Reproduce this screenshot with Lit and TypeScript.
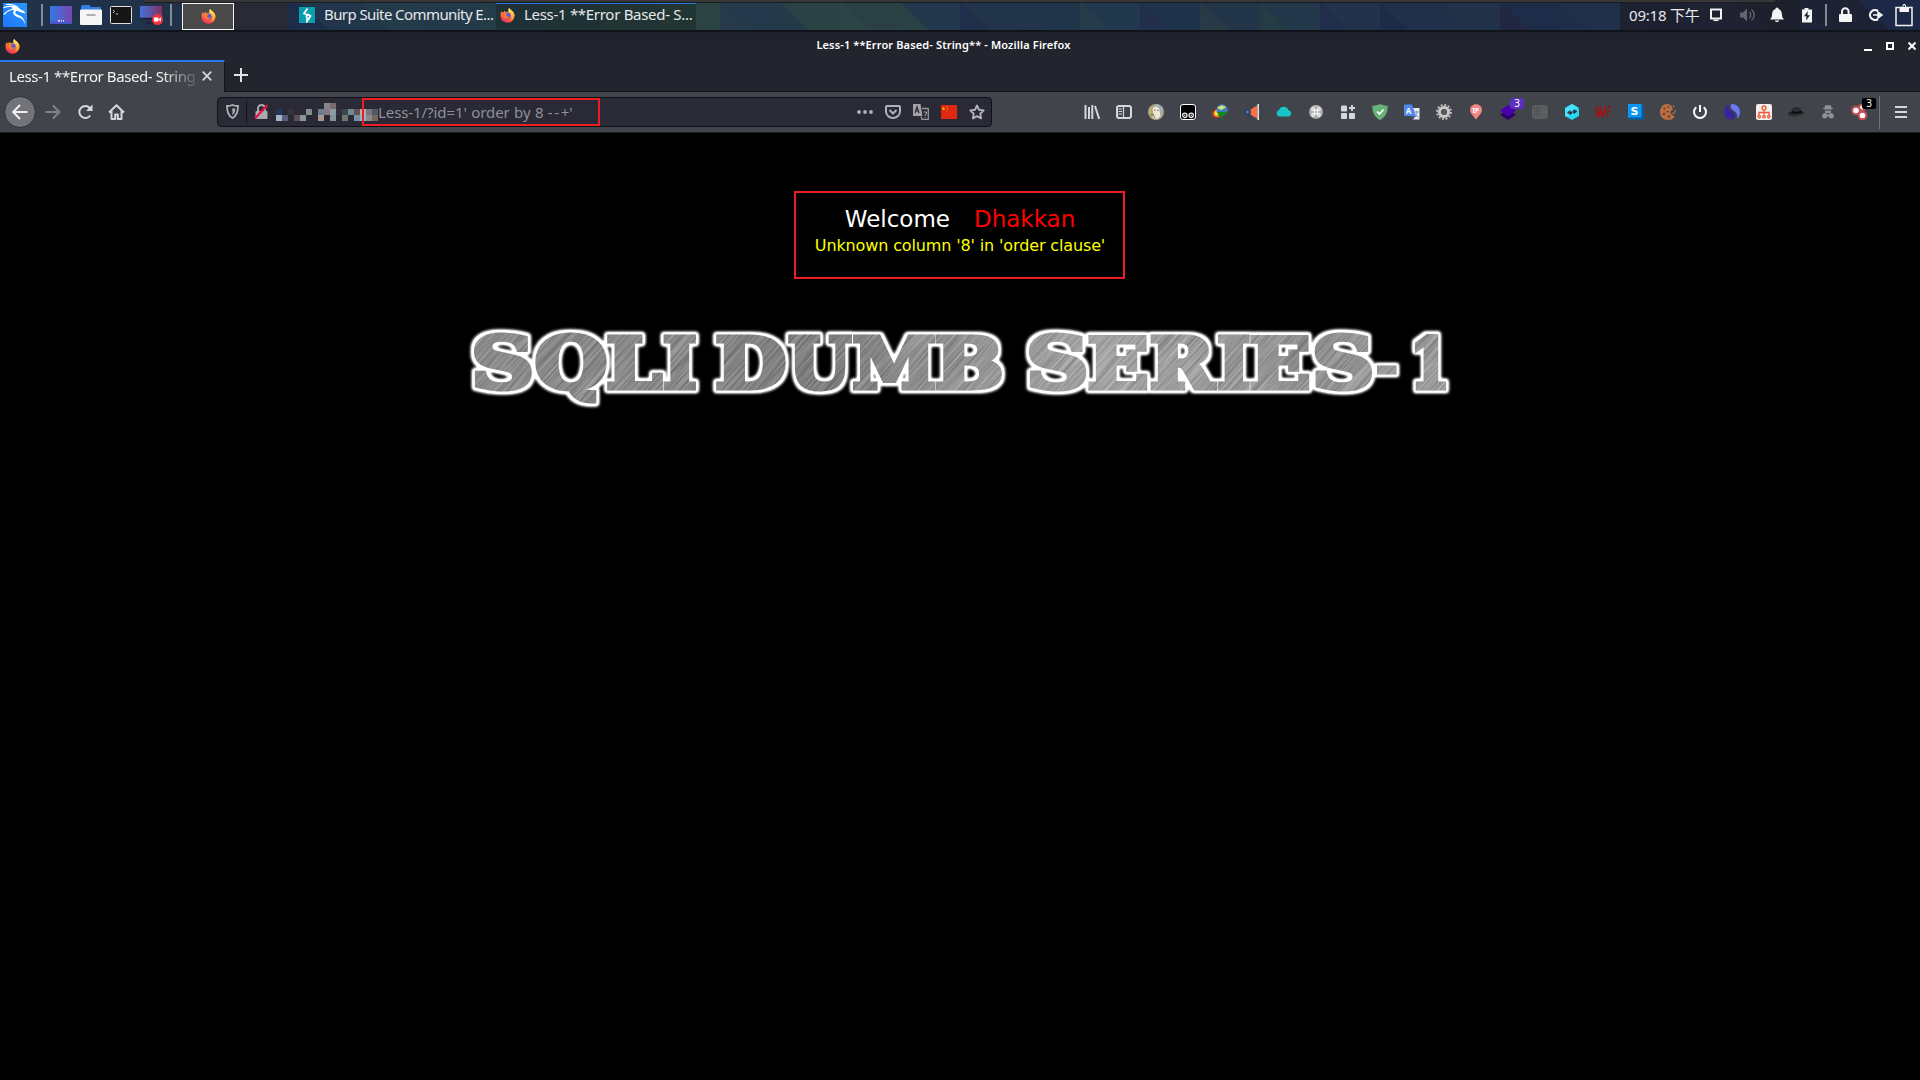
import { LitElement, html, svg, css, TemplateResult } from "lit";
import { customElement } from "lit/decorators.js";

const icon = (w: number, h: number, body: TemplateResult, vb = `0 0 ${w} ${h}`) =>
  html`<svg class="icon" width=${w} height=${h} viewBox=${vb}>${body}</svg>`;

const firefox = (s: number) => icon(s, s, svg`
  <defs>
    <linearGradient id="fx" x1="0.8" y1="0" x2="0.3" y2="1"><stop offset="0" stop-color="#ffe14a"/><stop offset=".45" stop-color="#ff8a2a"/><stop offset="1" stop-color="#f5275c"/></linearGradient>
    <linearGradient id="fy" x1="0" y1="0" x2="0" y2="1"><stop offset="0" stop-color="#fff36a"/><stop offset="1" stop-color="#ff8d22"/></linearGradient>
  </defs>
  <path d="M1.6 3.4 3.2 5 5 2.8 6 4.6 9.6 3.4C8.8 2 9 .8 10 0c.6 2.2 5 3 5.400 7.500C15.600 12.500 12 15.700 8 15.700S.5 12.500.5 8c0-1.800.3-3.400 1.100-4.600z" fill="url(#fx)"/>
  <path d="M9.900 0c.6 2.200 4.900 3.200 5.400 7.400.2 3-1.500 5-3.700 5.800C13 10 12.400 6 9.600 4.500 8.400 3 8.800 1 9.900 0z" fill="url(#fy)"/>
  <circle cx="8" cy="8" r="3.300" fill="#5a57d8"/>
  <path d="M4 6.400c1-1 3-.9 4.200.1L6.300 7.700c.5 1.500 2.500 2 4 1-1 3-6 3-7-.2z" fill="#ff7a2c"/>
`, "0 0 16 16");

interface Cell { x: number; a: string; b: string }
const PANEL: Cell[] = [
  { x: 0, a: "#20354b", b: "#203349" }, { x: 60, a: "#20344a", b: "#203249" },
  { x: 120, a: "#20344b", b: "#203148" }, { x: 180, a: "#203148", b: "#203148" },
  { x: 240, a: "#1d2d49", b: "#1d2d49" }, { x: 300, a: "#1d2e4b", b: "#21354b" },
  { x: 360, a: "#22364a", b: "#243b4a" }, { x: 420, a: "#243a4a", b: "#233a4c" },
  { x: 480, a: "#243d48", b: "#243b49" }, { x: 540, a: "#273f45", b: "#253c47" },
  { x: 600, a: "#2a4343", b: "#284142" }, { x: 660, a: "#2c4544", b: "#2b4443" },
  { x: 720, a: "#263a4a", b: "#24394b" }, { x: 780, a: "#243a49", b: "#2b4245" },
  { x: 840, a: "#2c4446", b: "#2a4044" }, { x: 900, a: "#2a4145", b: "#22374b" },
  { x: 960, a: "#212e4b", b: "#21344a" }, { x: 1020, a: "#22354a", b: "#20344a" },
  { x: 1080, a: "#263c4a", b: "#22384c" }, { x: 1140, a: "#212f4c", b: "#1f344a" },
  { x: 1200, a: "#293a46", b: "#233649" }, { x: 1260, a: "#253c44", b: "#223749" },
  { x: 1320, a: "#202e4b", b: "#21324a" }, { x: 1380, a: "#1e2b48", b: "#202f4a" },
  { x: 1440, a: "#203049", b: "#213148" }, { x: 1500, a: "#212641", b: "#1d2c48" },
  { x: 1560, a: "#1f2e48", b: "#20304a" }, { x: 1620, a: "#1e2231", b: "#1d2030" },
  { x: 1680, a: "#1d2131", b: "#1e2231" }, { x: 1740, a: "#1f2130", b: "#1e202e" },
  { x: 1800, a: "#1d2439", b: "#1d2333" }, { x: 1860, a: "#1c2235", b: "#1c2845" },
];

const MOSAIC: [number, number, string][] = [
  [0, 6, "#253659"], [0, 12, "#a3b4c4"], [6, 12, "#556078"], [12, 6, "#35313a"], [18, 12, "#5b5054"],
  [24, 12, "#8b9499"], [30, 6, "#868b92"], [42, 6, "#6a7c92"], [42, 12, "#a8978f"], [48, 0, "#87838a"],
  [54, 0, "#776b6d"], [48, 6, "#857884"], [54, 6, "#8b9da3"], [54, 12, "#86929e"], [60, 6, "#30323c"],
  [66, 6, "#404451"], [66, 12, "#71756f"], [72, 6, "#6b8a95"], [78, 6, "#6a5053"], [78, 12, "#7691a5"],
  [84, 6, "#b3aeb1"], [84, 12, "#9db2c0"], [90, 6, "#77777d"], [90, 12, "#8b8a8a"], [96, 6, "#535a63"], [96, 12, "#7a675c"],
];

// Each banner letter is stretched to fill the box [left, right, top, bottom].
type Letter = [string, number, number, number, number];
const LETTERS: Letter[] = [
  ["S", 474.3, 531.4, 332.5, 392], ["Q", 535.7, 606.5, 332, 403], ["L", 607.4, 663, 335, 390.5],
  ["I", 663.4, 696, 335, 390.5], ["D", 716.4, 785.7, 335, 390.5], ["U", 788, 852.4, 335, 392],
  ["M", 853, 935.4, 335, 390.5], ["B", 936, 1002, 335, 390.5], ["S", 1029.3, 1086, 332.5, 392],
  ["E", 1088.7, 1147.3, 335, 390.5], ["R", 1150.7, 1217.3, 335, 390.5], ["I", 1218, 1250, 335, 390.5],
  ["E", 1250.7, 1309.3, 335, 390.5], ["S", 1315, 1371.7, 332.5, 392], ["-", 1376, 1397.3, 364, 375],
  ["1", 1414.3, 1446.7, 334, 390.5],
];

function letterTransform([c, l, r, t, b]: Letter) {
  const ctx = document.createElement("canvas").getContext("2d")!;
  ctx.font = "bold 200px 'DejaVu Serif'";
  const m = ctx.measureText(c);
  const pad = 2.5;
  const w = m.actualBoundingBoxRight + m.actualBoundingBoxLeft;
  const h = m.actualBoundingBoxAscent + m.actualBoundingBoxDescent;
  const sx = (r - l - 2 * pad) / w;
  const sy = (b - t - 2 * pad) / h;
  return `matrix(${sx} 0 0 ${sy} ${l + pad + m.actualBoundingBoxLeft * sx} ${t + pad + m.actualBoundingBoxAscent * sy})`;
}

const L = "#d7d7db";
const EXT: TemplateResult[] = [
  icon(16, 16, svg`<path d="M1.500 1v14M5 3v12M8.300 1v14M11 2l4.200 13" stroke=${L} stroke-width="2" fill="none"/>`),
  icon(16, 16, svg`<rect x="1" y="2" width="14" height="12" rx="2" fill="none" stroke=${L} stroke-width="2"/><path d="M7.500 2v12M2.500 5h3.500M2.500 7.500h3.500M2.500 10h3.500" stroke=${L} stroke-width="1.200"/>`),
  icon(16, 16, svg`<circle cx="8" cy="8" r="8" fill="#a9a58b"/><path d="M1 5 6 1l2 5-4 8C1 12 0 8 1 5z" fill="#b5aa74"/><path d="M7 0c4 0 7 2 8 5l-3 5-5-6z" fill="#9bb0b8"/><path d="M4.500 6c1-5 6-4 7 0l1 6-3 3-5-1 1-4z" fill="#efe6d6"/><path d="M6 6h1.500M9 6.500h1.500" stroke="#8a6b50"/><path d="M2 12l3-2 2 4" stroke="#6f7f45" fill="none"/>`),
  icon(16, 16, svg`<rect x=".5" y=".5" width="15" height="15" rx="2.500" fill="#000" stroke="#fff"/><g fill="#000" stroke="#e8e8e8" stroke-width="1.300"><circle cx="4.800" cy="11.300" r="2.200"/><circle cx="11.200" cy="11.300" r="2.200"/></g><circle cx="4.800" cy="11.300" r=".7" fill="#fff"/><circle cx="11.200" cy="11.300" r=".7" fill="#fff"/>`),
  icon(16, 16, svg`<ellipse cx="6" cy="9" rx="6" ry="4.500" transform="rotate(-25 6 9)" fill="#e5391f"/><ellipse cx="7" cy="9" rx="5" ry="3.500" transform="rotate(-25 6 9)" fill="#f6e32e"/><circle cx="10" cy="6" r="5.700" fill="#3c7dcc"/><path d="M5 4c3-3 6-3 9-1-2 2-3 2-5 3z" fill="#c9db3b"/><circle cx="9.500" cy="3.500" r="1.700" fill="#cfe2df" opacity=".8"/><path d="m5 8 11-.5-2 2-1 2-2-.5-1 5-1.500-4-3.500 0 2-2z" fill="#108a13"/>`),
  icon(16, 16, svg`<path d="M6.500 5.500 13 1.500v13l-6.500-4z" fill="#ff7043"/><path d="M14.200 0v16" stroke="#dfe5e8" stroke-width="1.600"/><circle cx="3.500" cy="8" r="3.200" fill="#2b4166"/><circle cx="3.500" cy="8" r="1.300" fill="#6f88a8"/><path d="m4.500 10.500 1 4.500" stroke="#2b4166" stroke-width="2"/>`),
  icon(16, 16, svg`<path d="M3.500 12.500a3.400 3.400 0 0 1-.5-6.600A5 5 0 0 1 12.300 6a3.400 3.400 0 0 1 .8 6.500z" fill="#17c5c9"/>`),
  icon(16, 16, svg`<circle cx="8" cy="8" r="7" fill="#a6a6a8"/><circle cx="8" cy="7" r="6" fill="#b4b4b5"/><path d="M6.400 6.400h3.200v3.200H6.400zM6.400 6.400H5.200a1.300 1.300 0 1 1 1.200-1.300zM9.600 6.400V5.200A1.300 1.300 0 1 1 10.800 6.400zM9.600 9.600h1.200a1.300 1.300 0 1 1-1.200 1.300zM6.400 9.600v1.300A1.300 1.300 0 1 1 5.200 9.600z" fill="none" stroke="#f7f7f7" stroke-width="1.100"/>`),
  icon(16, 16, svg`<g fill=${L}><rect x="1" y="1.500" width="6" height="6" rx="1"/><rect x="1" y="9" width="6" height="6" rx="1"/><rect x="9" y="9" width="6" height="6" rx="1"/></g><path d="M12 1v6M9 4h6" stroke=${L} stroke-width="1.800"/>`),
  icon(16, 16, svg`<path d="M8 0c2.500 1.300 5 1.700 7.800 1.800C15.800 9 13 13.500 8 16 3 13.500.2 9 .2 1.800 3 1.700 5.500 1.300 8 0z" fill="#67b279"/><path d="m5 7.500 2.500 2.500L11.500 5.500" stroke="#fff" stroke-width="1.700" fill="none"/>`),
  icon(16, 16, svg`<path d="M7 4h8.500v11.500H9z" fill="#e8eaed"/><path d="M0 .5h8l4 11.500H0z" fill="#4f87ed"/><path d="m8 12 4 0-3 3.500z" fill="#3454a8"/><path d="M10 8h5M12.500 7v1.500c0 2-1 3-2 4m1-2 3 3" stroke="#7792c8" fill="none"/><text x="1.800" y="9.500" font-family="Noto Sans" font-size="8" font-weight="700" fill="#fff">A</text>`),
  icon(16, 16, svg`<circle cx="8" cy="8" r="6.900" fill="none" stroke="#bfbfbf" stroke-width="2" stroke-dasharray="2 1.612"/><circle cx="8" cy="8" r="4.500" fill="#3c3d40" stroke="#c9c9c9" stroke-width="3"/><circle cx="8" cy="8" r="2.600" fill="#5c5c5c" stroke="#555"/>`),
  icon(16, 16, svg`<path d="M8 .3c3.500 0 6 2.500 6 5.700S10.500 12 8 15.500C5.500 12 2 9.200 2 6S4.500.3 8 .3z" fill="#f28786"/><text x="4.600" y="8.500" font-family="Noto Sans" font-size="6.500" font-weight="700" fill="#fff">IP</text>`),
  html`${icon(16, 16, svg`<path d="m0 10.500 8-4 8 4-8 5.500z" fill="#2d006f"/><path d="m0 6.500 8-5.500 8 5.500-8 6z" fill="#4800ab"/>`)}<span class="badge purple">3</span>`,
  icon(16, 16, svg`<rect x="0" y="1" width="16" height="14" rx="3" fill="#5c5d60"/><path d="M7.500 2v12" stroke="#505156"/><path d="M2 4h1M4 4h2M2 7h1M4 7h2M2 10h1M4 10h2" stroke="#3f4147" stroke-width="1.200"/>`),
  icon(16, 16, svg`<path d="m8 0 7 4v8l-7 4-7-4V4z" fill="#25d8f4"/><path d="M8 0 1 4v8l2 1L14 3.500z" fill="#4ae2fa"/><path d="M3 8.500 6.500 6v1.500H8V10H6.500v1.200zM13.500 7.500 9.800 5v1.500H8.500V9h1.300v1.200z" fill="#2b3b4d"/>`),
  icon(18, 16, svg`<path d="M.8 2.500 3.300 13 5.600 6l2.300 7 3-10.500M5.600 6 4.800 2.500" stroke="#b00c10" stroke-width="1.700" fill="none" stroke-miterlimit="2"/><path d="M13 2.800h4M12.500 7.500h3M11.500 12.500h3M13.500 2.800l-2 9.700" stroke="#8c1416" stroke-width="1.100"/>`),
  icon(16, 16, svg`<path d="M0 0h13.500L16 2.500V16H2.500L0 13.500z" fill="#0b5c96"/><path d="M0 0h13.500v13.500H0z" fill="#0a96f5"/><text x="2.600" y="10.800" font-family="DejaVu Sans" font-weight="700" font-size="11" fill="#fff">S</text>`),
  icon(16, 16, svg`<path d="M7.500 0C3 0 0 3.500 0 8s3.500 8 8 8c3.500 0 5.500-1.500 6.700-3.500l-2.700-1.500-2-3 3-3-1-2.500C11 1 9.500 0 7.500 0z" fill="#b96f45"/><g fill="#6e3621"><circle cx="4.500" cy="4.500" r="1.100"/><circle cx="8.500" cy="3" r=".9"/><circle cx="4" cy="10" r="1.200"/><circle cx="7.500" cy="7.500" r="1"/><circle cx="9" cy="12.500" r="1.200"/></g><path d="M13 1.500h1.500V3H13zM14 6h2v1.500h-2zM12.500 8.500H15V10h-2.500z" fill="#b96f45"/>`),
  icon(16, 16, svg`<path d="M4.300 3.200a6 6 0 1 0 7.400 0" fill="none" stroke="#fff" stroke-width="2"/><path d="M8 1v7" stroke="#fff" stroke-width="2"/>`),
  icon(16, 16, svg`<path d="M5 .6C-1 3.500-1.500 11 4 14.800c3.500 2 7.500 0 7-3.300C10.500 8 6 7.500 5 4.200 4.700 3 4.700 1.800 5 .6z" fill="#37259b"/><path d="M7.500 0C13 0 16.500 4 15.900 9c-.3 2.800-1.500 4.600-3 5.700C14 10 12.500 8 9.500 6.400 6.500 4.500 6 2 7.500 0z" fill="#6c77fb"/>`),
  icon(16, 16, svg`<rect width="16" height="16" rx="2" fill="#f2efee"/><g stroke="#f15a38" fill="none" stroke-width="1.400"><circle cx="8" cy="4" r="2"/><path d="M8 6.500v4M3 11V8.500h10V11"/><circle cx="3.200" cy="12.600" r="1.200"/><circle cx="8" cy="12.600" r="1.200"/><circle cx="12.800" cy="12.600" r="1.200"/></g>`),
  icon(16, 16, svg`<ellipse cx="8" cy="9.500" rx="8" ry="2.800" transform="rotate(-5 8 9.500)" fill="#1c1c1e"/><path d="M3.500 8.500 4.500 4c2-1.200 5-1.200 8 0l.5 4.500c-3 1.800-6 1.800-9.500 0z" fill="#2d2d30"/><path d="M3.700 7.500c3 1.600 6.500 1.400 9.200 0" stroke="#0c0c0d" stroke-width="1.500" fill="none"/><path d="M1 10.500c4 1.500 9 1.200 14-1" stroke="#54555b" stroke-width=".7" fill="none"/>`),
  icon(16, 16, svg`<g fill="#8f9194"><path d="M5 1.500 6.500 1l1.500.5L9.500 1l1.500.5.5 2.500H13v1H3V4h1.500z"/><path d="M4.500 5.500h7L10.500 9h-5z"/><path d="M3 9.500 6 9l2 2 2-2 3 .5 1 4-3 1-2-1v-1H7v1l-2 1-3-1z"/></g><path d="M5.500 6.500h2M8.500 6.500h2" stroke="#44464c"/>`),
  html`${icon(18, 16, svg`<g fill="#fff" stroke="#c45055" stroke-width="2"><circle cx="11" cy="3.500" r="3"/><circle cx="5" cy="6.500" r="3.800"/><circle cx="11.500" cy="11.500" r="3.800"/></g>`)}<span class="badge black">3</span>`,
];

@customElement("app-root")
export class AppRoot extends LitElement {
  static styles = css`
    :host { display: flex; flex-direction: column; width: 1920px; height: 1080px; background: #000; overflow: hidden; font-family: "Noto Sans", "Noto Sans CJK SC", sans-serif; }
    * { box-sizing: border-box; }
    svg { display: block; flex: none; }
    .panel { position: relative; height: 32px; flex: none; border-bottom: 2px solid #11131a; overflow: hidden; }
    .wall { position: absolute; left: 0; top: 0; }
    .prow { position: relative; display: flex; height: 30px; color: #e6e8ea; font-size: 15px; }
    .launch { display: flex; align-items: center; padding-left: 3px; width: 182px; }
    .launch .sep { margin: 0 7px 0 14px; }
    .launch .sep.last { margin-left: 6px; }
    .sep { width: 2px; height: 22px; background: #82899a; flex: none; }
    .launch .icon + .icon { margin-left: 8px; }
    .win { width: 52px; height: 27px; margin-top: 3px; border: 1px solid #f4f4f4; background: #494949; display: grid; place-items: center; }
    .gap { width: 54px; height: 27px; margin-top: 3px; background: #282a35; }
    .task { display: flex; align-items: center; height: 27px; margin-top: 3px; white-space: pre; line-height: 22px; padding-bottom: 3px; }
    .task span { padding-bottom: 2px; }
    .burp { width: 208px; padding-left: 11px; }
    .burp span { margin-left: 9px; letter-spacing: -0.58px; }
    .act { width: 200px; padding-left: 4px; background: rgba(22, 38, 34, .45); border-top: 1px solid #2b73df; padding-bottom: 4px; }
    .act span { margin-left: 9px; letter-spacing: -0.3px; }
    .tray { display: flex; align-items: center; margin-left: auto; width: 291px; }
    .tray .sep { margin-left: -3px; }
    .clock { width: 80px; white-space: nowrap; line-height: 24px; letter-spacing: -0.2px; padding-bottom: 1px; }
    .title { height: 28px; flex: none; background: linear-gradient(#1f2029, #23252e 70%); display: flex; align-items: center; padding: 0 4px 0 5px; color: #fff; }
    .title .name { flex: 1; text-align: center; font-size: 11px; font-weight: 600; line-height: 18px; padding: 0 0 2px 3px; letter-spacing: 0.13px; }
    .wbtns { display: flex; gap: 14px; align-items: center; }
    .tabs { height: 32px; flex: none; background: #23252e; display: flex; border-bottom: 1px solid #15161c; }
    .tab { width: 225px; height: 32px; background: #42444b; border-top: 2px solid #2678ef; border-right: 1px solid #15161c; display: flex; align-items: center; gap: 6px; padding: 0 12px 2px 9px; color: #f3f3f3; }
    .tab span { width: 187px; white-space: nowrap; font-size: 15px; line-height: 24px; letter-spacing: -0.42px; -webkit-mask-image: linear-gradient(90deg, #000 152px, transparent 192px); }
    .plus { padding: 8px 0 0 9px; }
    .bar { height: 41px; flex: none; background: #42444b; border-bottom: 1px solid #191a20; display: flex; align-items: center; }
    .nav { width: 217px; display: flex; align-items: center; padding-left: 4px; }
    .forward { margin-left: 9px; } .reload { margin-left: 16px; } .home { margin-left: 15px; }
    .back { width: 32px; height: 32px; border-radius: 50%; background: #737479; border: 1px solid #2c2e35; display: grid; place-items: center; }
    .url { position: relative; width: 775px; height: 30px; margin-top: -1px; background: #292a35; border: 1px solid #101116; border-radius: 4px; display: flex; align-items: center; padding: 0 6px 0 8px; color: #909096; font-size: 15px; }
    .url .div { width: 1px; height: 22px; background: #101116; margin: 0 7px 0 7px; }
    .url .text { white-space: pre; line-height: 24px; flex: 1; padding-top: 1px; letter-spacing: -0.08px; word-spacing: 0.6px; }
    .url .text i { font-style: normal; letter-spacing: 1.6px; }
    .mosaic { margin: 1px 0 0 7px; }
    .mark { position: absolute; left: 144px; top: 0; width: 238px; height: 28px; border: 2px solid #ee1c24; }
    .uicons { display: flex; gap: 12px; align-items: center; }
    .exts { margin-left: 84px; display: grid; grid-template-columns: repeat(25, 32px); }
    .ext { position: relative; height: 32px; display: grid; place-items: center; }
    .badge { position: absolute; left: 18px; top: 2px; width: 14px; height: 11px; border-radius: 2px; color: #fff; font-size: 10px; line-height: 11px; text-align: center; }
    .purple { background: #5b2fbe; } .black { background: #000; }
    .bar .end { width: 1px; height: 33px; background: #73757b; margin-left: 3px; margin-right: 15px; }
    .page { flex: 1; background: #000; padding-top: 58px; display: flex; flex-direction: column; }
    .box { width: 331px; height: 88px; margin-left: 794px; border: 2px solid #ee1c24; padding: 12px 0 0 1px; text-align: center; font-family: "DejaVu Sans", sans-serif; white-space: pre; }
    .hi { font-size: 23px; line-height: 29px; color: #fff; }
    .hi span { color: #f00; margin-left: 24px; }
    .err { font-size: 16px; line-height: 20px; color: #ff0; margin-top: 2px; letter-spacing: -0.13px; }
    .banner { margin: 36px 0 0 460px; }
    .banner text { font: bold 200px "DejaVu Serif", serif; }
  `;

  render() {
    return html`
      <div class="panel">
        <svg class="wall" width="1920" height="30" viewBox="0 0 1920 30">
          ${PANEL.map(c => svg`<rect x=${c.x} width="60" height="30" fill=${c.b}/><path d="M${c.x} 3h1l28 27h-29z" fill=${c.a}/>`)}
          <rect x="144" width="1631" height="2" fill="#373737"/><rect x="144" y="2" width="1631" height="1" fill="#1b1c1f"/>
        </svg>
        <div class="prow">
          <div class="launch">
            ${icon(24, 24, svg`<defs><linearGradient id="k" x1="0" y1="1" x2="1" y2="0"><stop stop-color="#1f76ff"/><stop offset="1" stop-color="#2b98fa"/></linearGradient></defs><rect width="24" height="24" fill="url(#k)"/><path d="M3 1.500C7 1 11 1.500 14.500 4M.5 4.800C5 3 9.500 3 13.500 5M1 11.500C4 8 8 6 13 6.300" stroke="#fff" fill="none" stroke-width="1.200"/><path d="M11 2.500c3 .8 5 2 6.500 4l3.500 1.500 1.500 2.500-3.500-.7-3-1.300c-1.500-.8-2.500-.8-3.300-.3-1 1.500.3 3.300 3 4 4 1.200 6 4.300 6.500 9.500-1.500-4.500-3.500-6.500-7-7.400-4.500-1.200-6-4.300-4.200-7.300L8.500 5z" fill="#fff"/>`)}
            <div class="sep"></div>
            ${icon(22, 18, svg`<defs><linearGradient id="d" x1="0" y1="0" x2="1" y2="0"><stop stop-color="#3278e6"/><stop offset="1" stop-color="#7b47b0"/></linearGradient></defs><rect width="22" height="18" rx="1" fill="url(#d)"/><rect y="15.500" width="22" height="2.500" fill="#4a55ca"/><path d="M8 14.800h2M11 14.800h1M13 14.800h1" stroke="#fff" stroke-width="1.200"/>`)}
            ${icon(22, 20, svg`<path d="M1 2q0-2 2-2h6l2 2h9q1 0 1 2v4H1z" fill="#377fe6"/><rect y="4.500" width="22" height="15.500" rx="1" fill="#f6f6f6"/><path d="M6.500 10h9" stroke="#aaa" stroke-width="1.800"/>`)}
            ${icon(22, 18, svg`<rect x=".5" y=".5" width="21" height="17" rx="1" fill="#161616" stroke="#e0e0e0"/><path d="M3 4l1.500 1.500L3 7M6 8h2" stroke="#ddd" fill="none" stroke-width=".9"/>`)}
            ${icon(24, 20, svg`<defs><linearGradient id="r"><stop stop-color="#3f72de"/><stop offset="1" stop-color="#84315f"/></linearGradient></defs><rect y="1" width="22" height="13" fill="url(#r)"/><path d="M0 13.500h14M6 18h7" stroke="#191c33" stroke-width="1.500"/><circle cx="17.500" cy="14.500" r="5.500" fill="#f2343d"/><path d="M14 12.500h4.500v4H14zM18.500 14.500l2.500-2v4z" fill="#fff"/>`)}
            <div class="sep last"></div>
          </div>
          <div class="win">${firefox(15)}</div>
          <div class="gap"></div>
          <div class="task burp">${icon(16, 16, svg`<rect width="16" height="16" fill="#0a9db0"/><path d="M8.500 1.500 5 6.500l3.500 1.500L7 10M8.500 7l3 2L8 14.500V10" stroke="#fff" stroke-width="1.700" fill="none"/>`)}<span>Burp Suite Community E...</span></div>
          <div class="task act">${firefox(15)}<span>Less-1 **Error Based- S...</span></div>
          <div class="tray">
            <span class="clock">09:18 下午</span>
            ${icon(14, 14, svg`<path d="M2 1.500h10v9H2z" fill="none" stroke="#f2f2f2" stroke-width="2"/><path d="M4.500 12.300h5" stroke="#f2f2f2" stroke-width="1.500"/>`)}
            ${icon(47, 16, svg`<g transform="translate(17 0)"><path d="M0 5.500h3l4-4v13l-4-4H0z" fill="#63656d"/><path d="M9.500 5c1.500 1.500 1.500 4.500 0 6M11.500 2.500c3.500 3 3.500 8 0 11" stroke="#63656d" stroke-width="1.400" fill="none"/></g>`)}
            ${icon(14, 16, svg`<path d="M7 .5c1 0 1.500.8 1.500 1.500C11.500 3 11.800 5.500 12 8c.1 2 .8 3 2 4.500H0C1.200 11 1.900 10 2 8c.2-2.500.5-5 3.500-6C5.500 1.300 6 .5 7 .5zM5 13.500h4c0 2-4 2-4 0z" fill="#f4f4f4"/>`)}
            ${icon(44, 16, svg`<g transform="translate(17 0)"><path d="M1 2.500h2.500V1h4v1.500H11V15.500H1z" fill="#f4f4f4"/><path d="M6.800 4 3 9.300h2.500L5 13.500 9 8.200H6.500z" fill="#1d2131"/></g>`)}
            <div class="sep"></div>
            ${icon(36, 16, svg`<g transform="translate(12 0)"><path d="M3 8V4.500a3.300 3.300 0 0 1 6.600 0V8" fill="none" stroke="#f4f4f4" stroke-width="2"/><rect y="7" width="13" height="8" rx="1" fill="#f4f4f4"/></g>`)}
            ${icon(31, 16, svg`<g transform="translate(5 0)"><path d="M10 4A5 5 0 1 0 10 12" fill="none" stroke="#f4f4f4" stroke-width="2.200"/><path d="M5 8h6M10 5l4 3-4 3z" stroke="#f4f4f4" fill="#f4f4f4" stroke-width="1.500"/></g>`)}
            ${icon(20, 24, svg`<rect x="2" y="4.500" width="16" height="18" fill="none" stroke="#f4f4f4" stroke-width="1.500"/><path d="M5.500 4.500h3v-2a1.800 1.800 0 0 1 3.500 0v2h3V9h-9.500z" fill="#f4f4f4"/><circle cx="10.200" cy="3.200" r=".9" fill="#1c2845"/>`)}
          </div>
        </div>
      </div>
      <div class="title">
        ${firefox(15)}<div class="name">Less-1 **Error Based- String** - Mozilla Firefox</div>
        <div class="wbtns">
          ${icon(8, 10, svg`<path d="M0 9h8" stroke="#fff" stroke-width="2"/>`)}
          ${icon(8, 8, svg`<rect x="1" y="1" width="6" height="6" fill="none" stroke="#fff" stroke-width="2"/>`)}
          ${icon(8, 8, svg`<path d="m.5.5 7 7m0-7-7 7" stroke="#fff" stroke-width="2"/>`)}
        </div>
      </div>
      <div class="tabs">
        <div class="tab"><span>Less-1 **Error Based- String</span>${icon(10, 10, svg`<path d="m.7.7 8.600 8.600m0-8.600L.7 9.300" stroke="#d8d8dc" stroke-width="1.700"/>`)}</div>
        <div class="plus">${icon(14, 14, svg`<path d="M7 0v14M0 7h14" stroke="#e2e2e4" stroke-width="2"/>`)}</div>
      </div>
      <div class="bar">
        <div class="nav">
          <div class="back">${icon(16, 16, svg`<path d="M15.500 8H1.500M8 1 1.200 8 8 15" stroke="#f0f0f1" stroke-width="2" fill="none"/>`)}</div>
          <svg class="forward" width="16" height="16"><path d="M.5 8h14M8 1.500 14.500 8 8 14.500" stroke="#818287" stroke-width="2" fill="none"/></svg>
          <svg class="reload" width="16" height="16"><path d="M13.200 11.500A6 6 0 1 1 12.800 4" stroke=${L} stroke-width="2" fill="none"/><path d="M15.500.5v6.500H9z" fill=${L}/></svg>
          <svg class="home" width="17" height="16"><path d="M1 8.500 8.500 1.200 16 8.500M3.500 7v8h3.700v-4.500h2.600V15h3.700V7" stroke=${L} stroke-width="2" fill="none" stroke-linejoin="round"/></svg>
        </div>
        <div class="url">
          ${icon(13, 15, svg`<path d="M6.500 1c1.700.8 3.400 1 5.500 1 0 6-1.500 10-5.500 12C2.500 12 1 8 1 2c2.100 0 3.800-.2 5.500-1z" fill="none" stroke="#b1b1b8" stroke-width="1.800"/><path d="M6.500 4c1 .4 1.700.6 2.700.7-.1 3-.7 5-2.700 6.500z" fill="#b1b1b8"/>`)}
          <div class="div"></div>
          ${icon(15, 16, svg`<path d="M4 7V4.500a3.500 3.500 0 0 1 7 0V7" fill="none" stroke="#aaaab1" stroke-width="2"/><rect x="1.500" y="7" width="12" height="8" rx="1" fill="#aaaab1"/><path d="M1 14.500 13.500 1" stroke="#e9103f" stroke-width="2"/>`)}
          <svg class="mosaic" width="102" height="18">${MOSAIC.map(([x, y, c]) => svg`<rect x=${x} y=${y} width="6" height="6" fill=${c}/>`)}</svg>
          <span class="text">Less-1/?id=1' order by 8 <i>--</i>+'</span>
          <div class="uicons">
            ${icon(16, 16, svg`<g fill="#b1b1b8"><circle cx="2" cy="8" r="1.900"/><circle cx="8" cy="8" r="1.900"/><circle cx="14" cy="8" r="1.900"/></g>`)}
            ${icon(16, 16, svg`<path d="M2 2h12q1 0 1 1v4.500a7 6.500 0 0 1-14 0V3q0-1 1-1z" fill="none" stroke="#b1b1b8" stroke-width="2"/><path d="m4.500 6 3.500 3.500L11.500 6" stroke="#b1b1b8" stroke-width="2" fill="none"/>`)}
            ${icon(16, 16, svg`<path d="M0 0h7.500l2 12H0z" fill="#a1a1a7"/><path d="M9 4.500h6.300v11H9l-1-3" fill="none" stroke="#96969c" stroke-width="1.300"/><path d="M2 9 4 3l2 6M2.800 7h2.500" stroke="#292a35" fill="none" stroke-width="1.200"/><path d="M10.500 8h3v2l-1.500 1v1M12 13v1" stroke="#aaa" fill="none"/>`)}
            ${icon(16, 14, svg`<rect width="16" height="14" fill="#de2910"/><path d="m2.500 1.800.5 1.200h1.200l-1 .8.400 1.200-1.100-.7-1.100.7.4-1.200-1-.8H2z" fill="#ffde00"/><path d="M5 1.500h.8M6 3h.8M6 4.500h.8M5 6h.8" stroke="#e9a808"/>`)}
            ${icon(16, 16, svg`<path d="m8 1.500 2 4.300 4.700.6-3.400 3.300.8 4.700L8 12.100l-4.100 2.300.8-4.700L1.300 6.400 6 5.800z" fill="none" stroke="#b1b1b8" stroke-width="1.900" stroke-linejoin="round"/>`)}
          </div>
          <div class="mark"></div>
        </div>
        <div class="exts">${EXT.map(e => html`<div class="ext">${e}</div>`)}</div>
        <div class="end"></div>
        ${icon(12, 12, svg`<path d="M0 1h12M0 6h12M0 11h12" stroke=${L} stroke-width="2"/>`)}
      </div>
      <div class="page">
        <div class="box"><div class="hi">Welcome<span>Dhakkan</span></div><div class="err">Unknown column '8' in 'order clause'</div></div>
        <svg class="banner" width="1000" height="100" viewBox="460 315 1000 100">
          <defs>
            <linearGradient id="m1" gradientUnits="userSpaceOnUse" x1="470" y1="0" x2="1450" y2="0">
              <stop offset="0" stop-color="#8b8b8b"/><stop offset=".25" stop-color="#858585"/><stop offset=".36" stop-color="#787878"/><stop offset=".5" stop-color="#989898"/><stop offset=".65" stop-color="#a8a8a8"/><stop offset=".85" stop-color="#929292"/><stop offset="1" stop-color="#a0a0a0"/>
            </linearGradient>
            <filter id="brush" x="0" y="0" width="1" height="1" color-interpolation-filters="sRGB">
              <feTurbulence type="fractalNoise" baseFrequency="0.012 0.6" numOctaves="3" seed="4"/>
              <feColorMatrix values="2.200 0 0 0 -0.550  2.200 0 0 0 -0.550  2.200 0 0 0 -0.550  0 0 0 0 1"/>
            </filter>
            <filter id="glow" filterUnits="userSpaceOnUse" x="460" y="315" width="1000" height="100" color-interpolation-filters="sRGB">
              <feMorphology in="SourceAlpha" operator="dilate" radius="2"/><feGaussianBlur stdDeviation="1.700"/>
              <feComponentTransfer result="g"><feFuncR type="linear" slope="0" intercept="1"/><feFuncG type="linear" slope="0" intercept="1"/><feFuncB type="linear" slope="0" intercept="1"/><feFuncA type="linear" slope="1.500"/></feComponentTransfer>
              <feMerge><feMergeNode in="g"/><feMergeNode in="SourceGraphic"/></feMerge>
            </filter>
            <mask id="ink" maskUnits="userSpaceOnUse" x="460" y="315" width="1000" height="100">
              ${LETTERS.map(l => svg`<text transform=${letterTransform(l)} fill="#fff" stroke="#fff" stroke-width="14">${l[0]}</text>`)}
            </mask>
          </defs>
          <g filter="url(#glow)">${LETTERS.map(l => svg`<text transform=${letterTransform(l)} fill="#fff" stroke="#fff" stroke-width="18" stroke-linejoin="round">${l[0]}</text>`)}</g>
          <g mask="url(#ink)">
            <rect x="460" y="315" width="1000" height="100" fill="url(#m1)"/>
            <g opacity=".17"><g transform="rotate(-48 960 365)"><rect x="440" y="-20" width="1040" height="780" filter="url(#brush)"/></g></g>
          </g>
        </svg>
      </div>`;
  }
}
